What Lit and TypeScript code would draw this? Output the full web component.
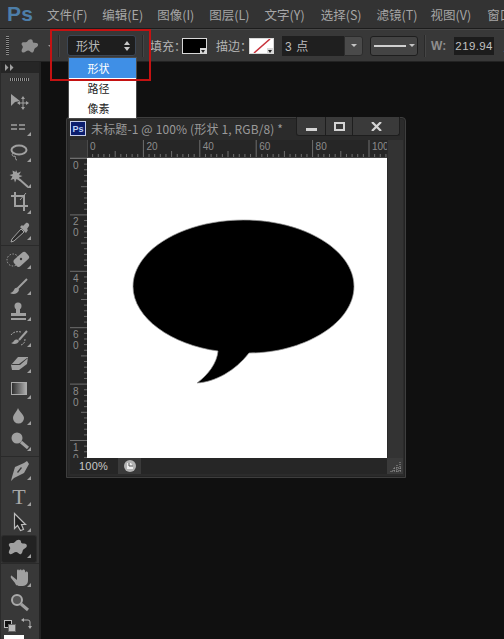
import { LitElement, html, css, svg } from "lit";
import { customElement } from "lit/decorators.js";

const corner = svg`<path class="f" d="M29 18v4h-4z"/>`;

const shapeBlob = "M13 6c2-3 6-3 6 0 0 2 3 1 5 2 2 2 0 4-2 5-2 1-1 4-3 5-2 1-3-2-5-2-2 0-4 3-6 2-2-1-1-3 0-5 1-2-2-3-1-5 1-2 4 0 6-2z";

const GROUPS = [
  [
    svg`<path class="f" d="M9 6l9 7-5 1-4 4z"/><path class="s1" d="M21 10v10M16 15h10"/><path class="f" d="M21 8l2 3h-4zM21 22l2-3h-4zM27 15l-3 2v-4zM15 15l3 2v-4z"/>`,
    svg`<path class="s2 dash" d="M9 11h16M9 15h16"/>${corner}`,
    svg`<ellipse class="s2" cx="17" cy="10" rx="7.500" ry="4.500"/><path class="s1" d="M11 13c-2 2 0 4 2 3 1 2 0 4 2 4"/>${corner}`,
    svg`<path class="f" d="M14 4l1.500 3 3.500-1.500-2 3.500 3.500 1-3.500 1.500 1 3.500-3.500-2-1.500 3.500-1-3.500-3.500 1 2-3.500-3-1.500 3.500-1-.5-3.500 3 1.500z"/><path class="s2" d="M17 13l9 8"/>${corner}`,
    svg`<path class="s2" d="M13 0v14h13M9 4h13v15"/><path class="s1" d="M18 8l6-7"/>${corner}`,
    svg`<path d="M10 21l9-10 3 3-10 9-3 1z" fill="#2a2a2a" stroke="#a2a2a2"/><path class="f" d="M18 9l6 6 2-3-1-1 2-3c1-2-2-4-3-3l-3 3-1-1z"/>${corner}`,
  ],
  [
    svg`<g class="dn3"><rect class="f" x="11" y="5" width="16" height="9" rx="3" transform="rotate(-42 19 9)"/><circle class="s1" stroke-dasharray="1.500 1.500" cx="11" cy="10" r="6"/><circle class="d" cx="19" cy="9" r="1.200"/></g>${corner}`,
    svg`<g class="dn2"><path class="s2" d="M15 14l10-10"/><path class="f" d="M17 15c-1-3-4-3-5 0-1 2-3 3-4 3 3 2 8 1 9-3z"/></g>${corner}`,
    svg`<circle class="f" cx="16" cy="7" r="3.500"/><path class="f" d="M14 9h4v5h-4zM9 14h15v3H9zM9 19h15v2H9z"/>${corner}`,
    svg`<path class="s2" d="M17 15l8-9"/><path class="f" d="M17 16c-1-2-4-2-5 0-1 1-2 2-3 2 3 2 7 1 8-2z"/><path class="s1" d="M9 10c2-3 6-4 10-3M23 14c0 3-1 5-4 6" stroke-dasharray="2 1"/>${corner}`,
    svg`<path class="f" d="M16 6h10l-1 7-8 6H10l-1-5z"/><path class="d" d="M10 14h8l8-7-1 0-8 6H9z"/>${corner}`,
    svg`<defs><linearGradient id="g"><stop offset="0" stop-color="#2a2a2a"/><stop offset="1" stop-color="#b0b0b0"/></linearGradient></defs><rect x="9.500" y="5.500" width="15" height="12" fill="url(#g)" stroke="#aaa"/>${corner}`,
    svg`<path class="f" d="M16 5c1 3 6 7 6 10a5.500 5.500 0 0 1-11 0c0-3 4-7 5-10z"/>${corner}`,
    svg`<circle class="f" cx="15" cy="9" r="5.500"/><path class="s3" d="M19 13l7 6"/>${corner}`,
  ],
  [
    svg`<path class="f" d="M25 3l2 3-5 9-10 5-3 3 1-4 3-10 9-4z"/><path class="d" d="M15 14l4-5 1 1-4 5z"/>${corner}`,
    svg`<text class="t" x="17" y="20" text-anchor="middle">T</text>${corner}`,
    svg`<path d="M12.500 3.500v15l3-3 3 5 3-1-2-5h4z" fill="#222" stroke="#bbb" stroke-width="1.200"/>${corner}`,
    svg`<path class="f" d="${shapeBlob}"/>${corner}`,
  ],
  [
    svg`<path class="f" d="M10 11l5 4V6c0-2 2-2 2 0 0-2 3-2 3 0V6c0-2 3-2 3 0v2c0-2 3-2 3 0v7c0 4-2 6-7 6-3 0-5 0-6-3l-4-5c-1-2 1-3 1-2z"/>${corner}`,
    svg`<circle cx="15" cy="9" r="5" fill="#555" stroke="#aaa" stroke-width="2"/><path class="s3" d="M19 13l7 6"/>`,
  ],
];

const SEL_GROUP = 2, SEL_TOOL = 3;

const MENU = [
  ["文件(F)", 15], ["编辑(E)", 14], ["图像(I)", 15], ["图层(L)", 15], ["文字(Y)", 16],
  ["选择(S)", 15], ["滤镜(T)", 13], ["视图(V)", 16], ["窗口(W)", 0],
] as const;

const UNIT = 2.82;
function hRuler() {
  const ticks = [];
  for (let i = 0; i <= 53; i++) {
    const x = 17 + i * 2 * UNIT;
    if (x > 317) break;
    const major = i % 10 === 0, mid = i % 5 === 0;
    ticks.push(svg`<line x1=${x} x2=${x} y1=${major ? 0 : mid ? 11 : 14} y2="17"></line>`);
  }
  const labels = [0, 20, 40, 60, 80, 100].map(
    (n) => svg`<text x=${17 + n * UNIT + 3} y="10">${n}</text>`
  );
  return html`<svg class="ruler" width="317" height="17" viewBox="0 0 317 17">${ticks}${labels}</svg>`;
}
function vRuler() {
  const ticks = [];
  for (let i = 0; i <= 53; i++) {
    const y = i * 2 * UNIT + 0.5;
    if (y > 300) break;
    const major = i % 10 === 0, mid = i % 5 === 0;
    ticks.push(svg`<line y1=${y} y2=${y} x1=${major ? 0 : mid ? 11 : 14} x2="17"></line>`);
  }
  const labels = [0, 20, 40, 60, 80, 100].flatMap((n) =>
    String(n).split("").map(
      (c, k) => svg`<text x="3" y=${n * UNIT + 11 + k * 11}>${c}</text>`
    )
  );
  return html`<svg class="ruler" width="17" height="301" viewBox="0 0 17 301">${ticks}${labels}</svg>`;
}

@customElement("app-root")
export class AppRoot extends LitElement {
  static styles = css`
    :host { display: block; width: 504px; height: 639px; }
    .root { position: relative; width: 504px; height: 639px; overflow: hidden; background: #101010; display: flex; flex-direction: column; font-family: "Noto Sans CJK SC", "Liberation Sans", sans-serif; }

    .menubar { height: 28px; background: #333; display: flex; align-items: center; flex: none; border-bottom: 1px solid #1c1c1c; overflow: hidden; }
    .logo { font: bold 21px "Liberation Sans", sans-serif; color: #4d7ea9; width: 47px; flex: none; padding-left: 7px; box-sizing: border-box; letter-spacing: 0.3px; }
    .mi { font-size: 12.5px; color: #a6a6a6; white-space: nowrap; flex: none; }

    .options { height: 33px; flex: none; background: #383838; border-top: 1px solid #474747; box-sizing: border-box; display: flex; align-items: center; border-bottom: 1px solid #222; color: #b4b4b4; font-size: 12px; overflow: hidden; }
    .grip { width: 3px; height: 19px; margin-left: 6px; flex: none; background: repeating-linear-gradient(#8a8a8a 0 1px, #202020 1px 2px); }
    .opt-shape { margin-left: 10px; flex: none; }
    .caret { width: 0; height: 0; border: 2px solid transparent; border-top: 2px solid #999; margin-left: 7px; margin-top: 2px; flex: none; }
    .sep { width: 1px; height: 22px; background: #2a2a2a; border-right: 1px solid #454545; flex: none; }
    .sel { margin-left: 7px; width: 69px; height: 21px; flex: none; box-sizing: border-box; background: #1e1e1e; border: 1px solid #3c4654; border-radius: 3px; display: flex; align-items: center; padding: 0 5px 0 8px; justify-content: space-between; color: #b8b8b8; font-size: 12px; }
    .updown { display: block; }
    .lbl { white-space: nowrap; flex: none; }
    .swatch { position: relative; width: 25px; height: 16px; box-sizing: border-box; border: 1px solid #d8d8d8; background: #000; flex: none; }
    .swatch.white { background: #fff; overflow: hidden; }
    .diag { display: block; }
    .mini { position: absolute; right: -1px; bottom: -1px; width: 7px; height: 6px; background: #d8d8d8; }
    .mini::after { content: ""; position: absolute; left: 1px; top: 2px; border: 2.5px solid transparent; border-top: 3px solid #222; }
    .input { width: 62px; height: 20px; background: #1f1f1f; color: #bdbdbd; display: flex; align-items: center; padding-left: 3px; box-sizing: border-box; font: 12px "Liberation Sans", "Noto Sans CJK SC", sans-serif; letter-spacing: 0.6px; flex: none; margin-left: 8px; }
    .ibtn { width: 19px; height: 20px; box-sizing: border-box; background: #4a4a4a; border: 1px solid #2c2c2c; border-radius: 0 3px 3px 0; display: flex; align-items: center; justify-content: center; flex: none; }
    .tri { width: 0; height: 0; border: 3px solid transparent; border-top: 3px solid #c4c4c4; margin-top: 3px; flex: none; }
    .line { width: 48px; height: 20px; box-sizing: border-box; background: #444; border: 1px solid #1e1e1e; border-radius: 3px; display: flex; align-items: center; padding: 0 2px 0 3px; gap: 3px; margin-left: 7px; flex: none; }
    .line i { display: block; height: 2px; width: 33px; background: #d0d0d0; }
    .num { width: 40px; height: 18px; background: #1c1c1c; color: #c2c2c2; font: 11.5px "Liberation Sans", sans-serif; letter-spacing: 0.4px; display: flex; align-items: center; justify-content: center; flex: none; margin-left: 8px; }
    .w { margin-left: 5px; font-family: "Liberation Sans", sans-serif; font-weight: bold; color: #8e8e8e; }

    .main { flex: 1; display: flex; min-height: 0; position: relative; }
    .toolbox { width: 41px; flex: none; box-sizing: border-box; background: #383838; border-right: 2px solid #232323; border-left: 1px solid #2a2a2a; display: flex; flex-direction: column; }
    .tb-head { height: 11px; background: #262626; flex: none; display: flex; align-items: center; padding-left: 4px; }
    .tb-grip { height: 3px; width: 19px; margin: 5px 0 0 9px; flex: none; background: repeating-linear-gradient(90deg, #929292 0 1px, #1e1e1e 1px 2px); }
    .tb-list { margin-top: 7px; display: flex; flex-direction: column; }
    .tool { height: 26px; width: 34px; margin-left: 1px; flex: none; display: flex; }
    .tool.on { background: #222; box-shadow: 0 0 0 1px #2c2c2c; border-radius: 2px; }
    .tool svg { display: block; }
    .f { fill: #a0a0a0; }
    .d { fill: #3a3a3a; }
    .s1, .s2, .s3 { fill: none; stroke: #a0a0a0; }
    .s1 { stroke-width: 1; } .s2 { stroke-width: 2; } .s3 { stroke-width: 3; }
    .dash { stroke-width: 1.5; stroke-dasharray: 6 2; }
    .dn3 { transform: translateY(3px); }
    .dn2 { transform: translateY(2px); }
    .t { font: 22px "Liberation Serif", serif; fill: #a8a8a8; }
    .tsep { margin: 1px 0; flex: none; height: 0; border-top: 1px solid #2a2a2a; }
    .colors { position: relative; height: 20px; }
    .c1 { position: absolute; left: 3px; top: 3px; width: 6px; height: 6px; background: #111; border: 1px solid #bbb; }
    .c2 { position: absolute; left: 7px; top: 7px; width: 6px; height: 6px; background: #bbb; border: 1px solid #666; }
    .swap { position: absolute; left: 20px; top: 1px; }
    .fg { position: absolute; left: 3px; top: 18px; width: 20px; height: 10px; background: #fff; }

    .win { position: absolute; left: 66px; top: 55px; width: 340px; height: 361px; box-sizing: border-box; background: #2b2b2b; border: 1px solid #3e3e3e; border-radius: 3px 4px 0 0; box-shadow: inset 0 0 0 1px #242424; display: flex; flex-direction: column; padding: 0 3px 3px; }
    .wtitle { height: 22px; flex: none; display: flex; align-items: flex-start; }
    .ps { width: 16px; height: 15px; margin-top: 3px; box-sizing: border-box; background: #0b1d6e; border: 1px solid #c5cde8; color: #bcd0f5; font: bold 9px "Liberation Sans", sans-serif; display: flex; align-items: center; justify-content: center; flex: none; }
    .wname { margin-left: 5px; margin-top: 2px; color: #9a9a9a; font-size: 12px; letter-spacing: 0.14px; white-space: nowrap; line-height: 18px; }
    .wbtns { margin-left: auto; margin-right: 2px; margin-top: -1px; height: 19px; display: flex; background: #3a3a3a; border: 1px solid #1e1e1e; border-top: none; border-radius: 0 0 3px 3px; box-sizing: border-box; flex: none; }
    .wb { display: flex; align-items: center; justify-content: center; border-left: 1px solid #1e1e1e; box-sizing: border-box; }
    .wb:first-child { border-left: none; }
    .canvas { display: grid; grid-template-columns: 17px 300px 16px; grid-template-rows: 18px 300px 16px; flex: none; }
    .ruler { display: block; }
    .ruler line { stroke: #6e6e6e; stroke-width: 1; }
    .ruler text { font: 10px "Liberation Sans", sans-serif; fill: #8c8c8c; }
    .rh { grid-column: 1 / 3; background: #262626; border-bottom: 1px solid #444; box-sizing: border-box; height: 18px; position: relative; }
    .corner { position: absolute; left: 0; top: 0; width: 17px; height: 17px; background: radial-gradient(#5a5a5a 35%, #333 40%) 0 0 / 2px 2px; }
    .rv { background: #262626; overflow: hidden; }
    .img { background: #fff; width: 300px; height: 300px; display: block; }
    .sb { background: #333; border-left: 1px solid #2a2a2a; grid-row: 1 / 3; grid-column: 3; }
    .status { grid-column: 1 / 3; background: #262626; display: flex; align-items: center; height: 16px; font: 11px "Liberation Sans", sans-serif; color: #c8c8c8; }
    .zoom { padding-left: 9px; width: 48px; box-sizing: border-box; flex: none; letter-spacing: 0.2px; }
    .doc { width: 23px; height: 16px; background: #3a3a3a; display: flex; align-items: center; justify-content: center; flex: none; }
    .rsz { background: #3a3a3a; display: flex; align-items: flex-end; justify-content: flex-end; }

    .menu { position: absolute; left: 68px; top: 57px; width: 69px; height: 62px; background: #fff; border: 1px solid #4a4a4a; box-sizing: border-box; display: flex; flex-direction: column; color: #222; font-size: 11px; }
    .menu div { height: 20px; flex: none; display: flex; align-items: center; justify-content: center; padding-right: 8px; }
    .menu .hi { background: #3f8fe6; color: #fff; }
    .redbox { position: absolute; left: 50px; top: 29px; width: 101px; height: 52px; box-sizing: border-box; border: 2px solid #c41212; pointer-events: none; }
    .ml4 { margin-left: 6px; } .ml-4 { margin-left: -4px; } .ml9 { margin-left: 9px; } .ml-3 { margin-left: -3px; } .ml6 { margin-left: 6px; }
  `;

  render() {
    return html`<div class="root">
      <div class="menubar">
        <div class="logo">Ps</div>
        ${MENU.map(([t, g]) => html`<span class="mi" style="margin-right:${g}px">${t}</span>`)}
      </div>

      <div class="options">
        <div class="grip"></div>
        <svg class="opt-shape" width="22" height="22" viewBox="4 -1 24 24"><path fill="#8f8f8f" d="${shapeBlob}"/></svg>
        <div class="caret"></div>
        <div class="sep ml6"></div>
        <div class="sel">形状
          <svg class="updown" width="6" height="10" viewBox="0 0 6 10"><path fill="#c8c8c8" d="M3 0l3 4H0zM3 10L0 6h6z"/></svg>
        </div>
        <div class="sep ml6"></div>
        <span class="lbl ml4">填充：</span>
        <div class="swatch ml-4"><span class="mini"></span></div>
        <span class="lbl ml9">描边：</span>
        <div class="swatch white ml-3">
          <svg class="diag" width="23" height="14" viewBox="0 0 23 14"><path d="M4 14L20 0" stroke="#c8323c" stroke-width="1.500"/></svg>
          <span class="mini"></span>
        </div>
        <div class="input">3 点</div>
        <div class="ibtn"><span class="tri"></span></div>
        <div class="line"><i></i><span class="tri"></span></div>
        <div class="sep ml6"></div>
        <span class="lbl w">W:</span>
        <div class="num">219.94</div>
        <span class="lbl ml9">点</span>
      </div>

      <div class="main">
        <div class="toolbox">
          <div class="tb-head">
            <svg width="9" height="7" viewBox="0 0 9 7"><path fill="#a0a0a0" d="M0 0l3.500 3.500L0 7zM5 0l3.500 3.500L5 7z"/></svg>
          </div>
          <div class="tb-grip"></div>
          <div class="tb-list">
            ${GROUPS.map((g, gi) => html`
              ${gi > 0 ? html`<div class="tsep"></div>` : ""}
              ${g.map((ic, ti) => html`<div class="tool ${gi === SEL_GROUP && ti === SEL_TOOL ? "on" : ""}">
                <svg width="34" height="26" viewBox="0 0 34 26">${ic}</svg>
              </div>`)}
            `)}
            <div class="colors">
              <span class="c1"></span><span class="c2"></span>
              <svg class="swap" width="11" height="12" viewBox="0 0 11 12"><path fill="none" stroke="#b0b0b0" d="M2 2h5q2 0 2 2v5"/><path fill="#b0b0b0" d="M3 0v4L0 2zM7 8h4l-2 3z"/></svg>
              <span class="fg"></span>
            </div>
          </div>
        </div>
        <div class="win">
          <div class="wtitle">
            <div class="ps">Ps</div>
            <div class="wname">未标题-1 @ 100% (形状 1, RGB/8) *</div>
            <div class="wbtns">
              <div class="wb" style="width:28px"><svg width="11" height="11" viewBox="0 0 11 11"><rect y="7" width="11" height="3" fill="#d4d4d4"/></svg></div>
              <div class="wb" style="width:27px"><svg width="11" height="9" viewBox="0 0 11 9"><rect x="1" y="1" width="9" height="7" fill="none" stroke="#d4d4d4" stroke-width="2"/></svg></div>
              <div class="wb" style="width:47px"><svg width="11" height="9" viewBox="0 0 11 9"><path d="M1 0l9 9M10 0l-9 9" stroke="#d4d4d4" stroke-width="2.200"/></svg></div>
            </div>
          </div>
          <div class="canvas">
            <div class="rh"><div class="corner"></div>${hRuler()}</div>
            <div class="sb"></div>
            <div class="rv">${vRuler()}</div>
            <svg class="img" width="300" height="300" viewBox="0 0 300 300">
              <path fill="#000" stroke="#9a9a9a" stroke-width="0.700"
                d="M156.500 62 C217 62 267 92 267 128.500 C267 165 217 195 162 195 C148 213 128 224 110 225 C121 217 130 205 131 193 C85 187 46 160 46 128.500 C46 92 96 62 156.500 62 Z"/>
            </svg>
            <div class="status">
              <span class="zoom">100%</span>
              <span class="doc"><svg width="12" height="12" viewBox="0 0 12 12"><circle cx="6" cy="6" r="6" fill="#b4b4b4"/><path d="M3 3h4l2 3v3H3z" fill="#eee"/><path d="M5 3v3h4" fill="none" stroke="#555"/></svg></span>
            </div>
            <div class="rsz"><svg width="14" height="14" viewBox="0 0 14 14"><path stroke="#9a9a9a" stroke-dasharray="1 1" d="M11 2v10M8 5v7M5 8v4M2 11v1M12 11H2M12 8H5"/></svg></div>
          </div>
        </div>
      </div>

      <div class="menu">
        <div class="hi">形状</div>
        <div>路径</div>
        <div>像素</div>
      </div>
      <div class="redbox"></div>
    </div>`;
  }
}
